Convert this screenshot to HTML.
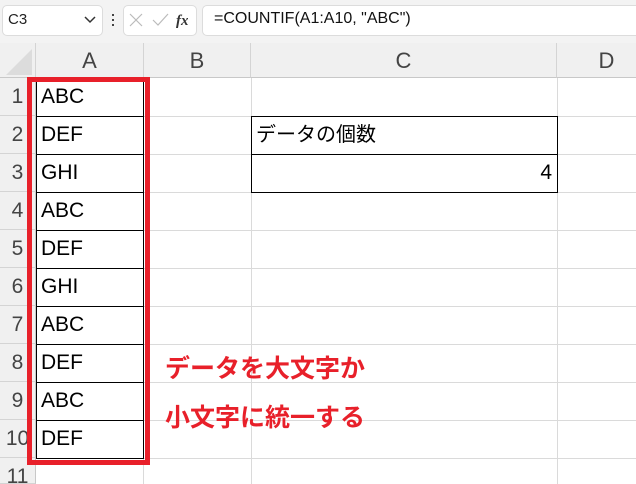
<!DOCTYPE html>
<html><head><meta charset="utf-8"><style>
html,body{margin:0;width:636px;height:484px;overflow:hidden}
body{background:#fff;font-family:"Liberation Sans","Noto Sans CJK JP",sans-serif;position:relative}
.a{position:absolute}
.tb{left:0;top:0;width:636px;height:43px;background:#f3f3f3}
.box{background:#fff;border:1px solid #dcdcdc;border-radius:5px}
.ch{top:43px;height:35px;background:#f0f0f0;border-right:1px solid #d4d4d4;border-bottom:1px solid #c8c8c8;box-sizing:border-box;text-align:center;font-size:22px;line-height:35px;color:#444}
.rh{left:0;width:36px;height:38px;background:#f0f0f0;border-right:1px solid #c8c8c8;border-bottom:1px solid #d4d4d4;box-sizing:border-box;text-align:center;font-size:21px;line-height:38px;color:#444}
.vl{top:78px;width:1px;height:406px;background:#dadada}
.hl{left:36px;width:600px;height:1px;background:#dadada}
.cell{left:36px;width:108px;height:39px;border:1px solid #000;box-sizing:border-box;font-size:21px;line-height:36px;padding-left:4px;color:#000}
.red{color:#e8202a;font-weight:bold;font-size:25px}
</style></head><body>
<div class="a tb"></div>
<div class="a box" style="left:2px;top:5px;width:99px;height:29px"></div>
<div class="a" style="left:8px;top:11px;font-size:15px;color:#222">C3</div>
<svg class="a" style="left:84px;top:16px" width="12" height="8"><path d="M1 1 L6 6 L11 1" stroke="#333" stroke-width="1.5" fill="none"/></svg>
<div class="a" style="left:112px;top:14px;width:2px;height:2px;background:#444;box-shadow:0 5px #444,0 10px #444"></div>
<div class="a box" style="left:123px;top:5px;width:72px;height:29px"></div>
<svg class="a" style="left:128px;top:12px" width="60" height="16"><path d="M2 2 L14 14 M14 2 L2 14" stroke="#bbb" stroke-width="1.2"/><path d="M25 8 L30 13 L40 2" stroke="#bbb" stroke-width="1.2" fill="none"/><text x="48" y="13" font-family="Liberation Serif" font-style="italic" font-weight="bold" font-size="15" fill="#333">fx</text></svg>
<div class="a box" style="left:202px;top:5px;width:440px;height:29px"></div>
<div class="a" style="left:214px;top:10px;font-size:16px;color:#111">=COUNTIF(A1:A10, "ABC")</div>

<div class="a ch" style="left:0;width:36px"></div>
<svg class="a" style="left:4px;top:47px" width="30" height="30"><path d="M28 2 L28 28 L2 28 Z" fill="#dcdcdc"/></svg>
<div class="a ch" style="left:36px;width:108px">A</div>
<div class="a ch" style="left:144px;width:107px">B</div>
<div class="a ch" style="left:251px;width:306px">C</div>
<div class="a ch" style="left:557px;width:100px">D</div>

<div class="a vl" style="left:143px"></div>
<div class="a vl" style="left:251px"></div>
<div class="a vl" style="left:557px"></div>
<div class="a hl" style="top:116px"></div><div class="a hl" style="top:154px"></div><div class="a hl" style="top:192px"></div><div class="a hl" style="top:230px"></div><div class="a hl" style="top:268px"></div><div class="a hl" style="top:306px"></div><div class="a hl" style="top:344px"></div><div class="a hl" style="top:382px"></div><div class="a hl" style="top:420px"></div><div class="a hl" style="top:458px"></div>

<div class="a rh" style="top:78px">1</div><div class="a rh" style="top:116px">2</div><div class="a rh" style="top:154px">3</div><div class="a rh" style="top:192px">4</div><div class="a rh" style="top:230px">5</div><div class="a rh" style="top:268px">6</div><div class="a rh" style="top:306px">7</div><div class="a rh" style="top:344px">8</div><div class="a rh" style="top:382px">9</div><div class="a rh" style="top:420px">10</div><div class="a rh" style="top:458px;height:26px">11</div>

<div class="a cell" style="top:78px">ABC</div><div class="a cell" style="top:116px">DEF</div><div class="a cell" style="top:154px">GHI</div><div class="a cell" style="top:192px">ABC</div><div class="a cell" style="top:230px">DEF</div><div class="a cell" style="top:268px">GHI</div><div class="a cell" style="top:306px">ABC</div><div class="a cell" style="top:344px">DEF</div><div class="a cell" style="top:382px">ABC</div><div class="a cell" style="top:420px">DEF</div>

<div class="a" style="left:251px;top:116px;width:307px;height:77px;border:1px solid #000;box-sizing:border-box"></div>
<div class="a" style="left:251px;top:154px;width:307px;height:1px;background:#000"></div>
<div class="a" style="left:256px;top:119px;font-size:20px;line-height:32px">データの個数</div>
<div class="a" style="left:500px;top:157px;width:52px;text-align:right;font-size:21px;line-height:32px">4</div>

<div class="a" style="left:27px;top:77px;width:123px;height:388px;border:5px solid #e8202a;box-sizing:border-box"></div>
<div class="a red" style="left:165px;top:349px">データを大文字か</div>
<div class="a red" style="left:165px;top:398px">小文字に統一する</div>
</body></html>
